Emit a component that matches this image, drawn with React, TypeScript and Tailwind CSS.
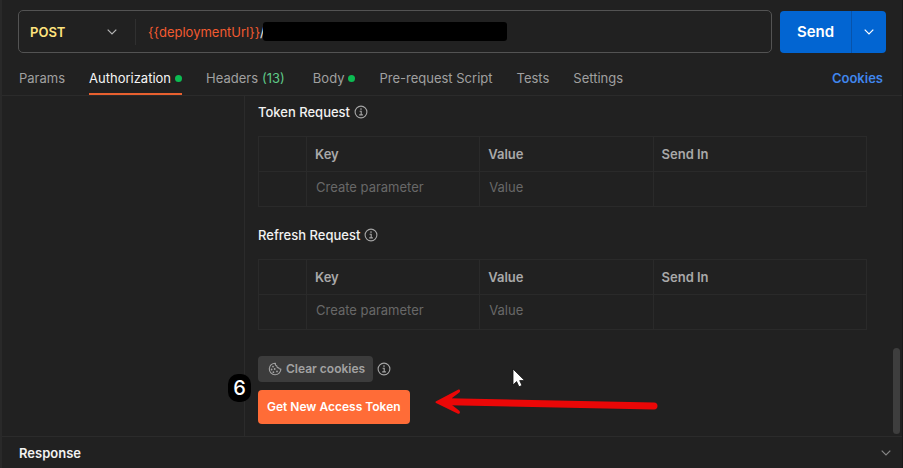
import React from "react";

type TabProps = {
  label: string;
  active?: boolean;
  dot?: boolean;
  count?: number;
};

function Chevron({ className }: { className: string }) {
  return (
    <svg viewBox="0 0 10 6" fill="none" stroke="currentColor" strokeWidth="1.2" className={className} aria-hidden="true">
      <path d="M0.7 0.7 5 5 9.3 0.7" />
    </svg>
  );
}

function InfoIcon() {
  return (
    <svg viewBox="0 0 14 14" fill="none" stroke="currentColor" className="size-[14px] text-[#a6a6a6]" aria-hidden="true">
      <circle cx="7" cy="7" r="5.9" strokeWidth="1.1" />
      <path d="M5.6 6.3H7.2V9.8M5.2 9.9H8.9" strokeWidth="1.1" />
      <circle cx="7" cy="4.1" r="0.8" fill="currentColor" stroke="none" />
    </svg>
  );
}

function CookieIcon() {
  return (
    <svg viewBox="0 0 14 14" fill="none" stroke="currentColor" strokeWidth="1.1" className="size-[14px]" aria-hidden="true">
      <path
        d="M7.4 1.2A5.8 5.8 0 1 0 12.9 7C12 7.3 11 6.8 10.8 5.8 9.6 6 8.7 5.1 8.9 4 7.7 3.7 7.1 2.5 7.4 1.2Z"
        strokeLinejoin="round"
      />
      <g fill="currentColor" stroke="none">
        <circle cx="5" cy="4.6" r="0.9" />
        <circle cx="3.6" cy="7.5" r="0.9" />
        <circle cx="6.7" cy="7" r="0.9" />
        <circle cx="5.4" cy="10.2" r="0.9" />
        <circle cx="9" cy="9.4" r="0.9" />
      </g>
    </svg>
  );
}

function Tab({ label, active, dot, count }: TabProps) {
  return (
    <button
      type="button"
      role="tab"
      aria-selected={!!active}
      className={
        active
          ? "flex h-[34px] items-center gap-1 border-b-2 border-[#e8602f] pt-0.5 text-[#f5f5f5]"
          : "flex h-[34px] items-center gap-1 border-b-2 border-transparent pt-0.5 text-[#a0a0a0]"
      }
    >
      <span>{label}</span>
      {count !== undefined && <span className="text-[#5fc888]">({count})</span>}
      {dot && <span className="size-[7px] rounded-full bg-[#0cbb52]" />}
    </button>
  );
}

function ParameterSection({ title }: { title: string }) {
  return (
    <section>
      <h2 className="flex h-4 items-center gap-1 font-medium text-[#f2f2f2]">
        {title}
        <InfoIcon />
      </h2>
      <table aria-label={title} className="mt-4 w-full table-fixed border-collapse text-left [&_td]:border [&_td]:border-[#2a2a2a] [&_th]:border [&_th]:border-[#2a2a2a]">
        <colgroup>
          <col className="w-12" />
          <col className="w-[28.5%]" />
          <col className="w-[28.5%]" />
          <col />
        </colgroup>
        <thead>
          <tr className="h-[35px] text-[#a9a9a9]">
            <th />
            <th className="px-2 font-semibold">Key</th>
            <th className="px-2 font-semibold">Value</th>
            <th className="px-2 font-semibold">Send In</th>
          </tr>
        </thead>
        <tbody>
          <tr className="h-[35px]">
            <td />
            <td className="px-2 pb-1">
              <input aria-label={`${title} key`} placeholder="Create parameter" className="block w-full bg-transparent pl-px outline-none placeholder:text-[#686868]" />
            </td>
            <td className="px-2 pb-1">
              <input aria-label={`${title} value`} placeholder="Value" className="block w-full bg-transparent pl-px outline-none placeholder:text-[#686868]" />
            </td>
            <td />
          </tr>
        </tbody>
      </table>
    </section>
  );
}

export default function App() {
  return (
    <div className="flex min-h-screen flex-col border-r border-l-2 border-r-[#191919] border-l-[#292929] bg-[#212121] font-['Inter','Liberation_Sans',sans-serif] text-[13px] leading-4 text-[#a0a0a0]">
      <div className="flex gap-2 pt-[10px] pr-4 pl-4">
        <div className="flex h-[43px] min-w-0 flex-1 items-center rounded-[5px] border border-[#535353]">
          <div className="relative flex h-[26px] w-[117px] items-center border-r border-[#303030]">
            <select aria-label="Method" className="w-full appearance-none bg-transparent pl-[11px] font-semibold text-[#ffe47e] outline-none">
              <option>POST</option>
            </select>
            <Chevron className="pointer-events-none absolute right-[18px] h-[6px] w-[10px] text-[#b5b5b5]" />
          </div>
          <div className="flex min-w-0 items-center pl-3">
            <input
              aria-label="Request URL"
              defaultValue="{{deploymentUrl}}"
              className="w-[112px] shrink-0 bg-transparent text-[#f15a30] outline-none"
            />
            <span className="text-[#e8e8e8]">/</span>
            <span className="-ml-[2px] h-[19px] w-[244px] rounded-[3px] bg-black" />
          </div>
        </div>
        <div className="mt-px flex h-[42px] overflow-hidden rounded-[4px] bg-[#0265d2] text-white">
          <button type="button" className="w-[72px] border-r border-[#0753ab] text-[15px] font-semibold">
            Send
          </button>
          <button type="button" aria-label="Send options" className="flex w-[34px] items-center justify-center">
            <Chevron className="h-[6px] w-[10px]" />
          </button>
        </div>
      </div>

      <div className="mt-2 flex items-center justify-between border-b border-[#2b2b2b] pr-[19px] pl-[17px]">
        <div role="tablist" className="flex gap-6">
          <Tab label="Params" />
          <Tab label="Authorization" active dot />
          <Tab label="Headers" count={13} />
          <div className="pl-1">
            <Tab label="Body" dot />
          </div>
          <Tab label="Pre-request Script" />
          <Tab label="Tests" />
          <Tab label="Settings" />
        </div>
        <a href="#cookies" className="font-semibold text-[#4086ed]">
          Cookies
        </a>
      </div>

      <main className="relative flex flex-1">
        <aside className="w-[243px] shrink-0 border-r border-[#2b2b2b]" />
        <div className="min-w-0 flex-1 pt-2 pr-[35px] pb-3 pl-[13px]">
          <div className="flex flex-col gap-5">
            <ParameterSection title="Token Request" />
            <ParameterSection title="Refresh Request" />
          </div>
          <div className="mt-[26px] flex items-center gap-1">
            <button type="button" className="flex h-[26px] items-center gap-1 rounded-[4px] bg-[#3c3c3c] pr-2 pl-[10px] text-xs font-semibold text-[#a2a2a2]">
              <CookieIcon />
              Clear cookies
            </button>
            <InfoIcon />
          </div>
          <button type="button" className="mt-2 h-[34px] rounded-[4px] bg-[#ff6c37] px-[9px] text-xs font-semibold text-white">
            Get New Access Token
          </button>
        </div>

        <div className="absolute right-[2px] bottom-[2px] h-[86px] w-[7px] rounded-full bg-[#3e3e3e]" />
        <span className="absolute bottom-[34px] left-[226px] flex h-7 w-[23px] items-center justify-center rounded-[10px] bg-black text-xl font-medium text-white">
          6
        </span>
        <svg viewBox="0 0 226 30" className="absolute bottom-[18px] left-[432px] h-[30px] w-[226px]" fill="none" aria-hidden="true">
          <path d="M15 13.8 220 18" stroke="#eb0707" strokeWidth="7" strokeLinecap="round" />
          <path d="M1.7 13.5 24 1.7C26 0.7 27 3.5 25 4.7L18 10V17L25 22.5C27 24.5 25.5 26.5 23.5 25.5L2 15Q1 14.2 1.7 13.5Z" fill="#eb0707" />
        </svg>
        <svg viewBox="0 0 14 20" className="absolute bottom-[48px] left-[510px] h-5 w-[14px]" aria-hidden="true">
          <path d="M1 1V17L4.6 13.6 7 18.8 10 17.4 7.7 12.6H12.7Z" fill="white" stroke="#111111" strokeWidth="0.8" />
        </svg>
      </main>

      <footer className="flex h-[33px] items-center justify-between border-t border-[#2b2b2b] pr-[11px] pl-[17px]">
        <h2 className="font-semibold text-[#f2f2f2]">Response</h2>
        <button type="button" aria-label="Expand response" className="text-[#868686]">
          <Chevron className="h-[6px] w-[10px]" />
        </button>
      </footer>
    </div>
  );
}
